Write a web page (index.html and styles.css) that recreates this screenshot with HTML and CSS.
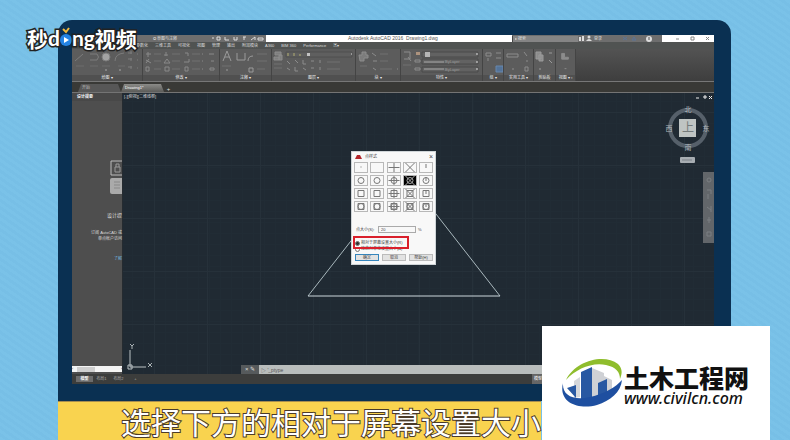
FILE: index.html
```html
<!DOCTYPE html>
<html lang="zh-CN">
<head>
  <meta charset="UTF-8">
  <meta name="viewport" content="width=device-width, initial-scale=1.0">
  <title>AutoCAD 点样式</title>
  <link rel="stylesheet" href="styles.css">
</head>
<body>
  <main class="page">
    <div class="monitor">
      <div class="app">
        <header class="titlebar">
          <div class="quick">
            <span class="workspace">✪ 草图与注释</span>
            <svg class="quick-icons" viewBox="0 0 56 7" width="56" height="7" fill="none" stroke="#ddd">
              <path d="M2 3h2M7 2h3v3h-3zM15 2v3h4M24 2v3h3v-3M33 2h3M34 2v3M41 5l4-3v3M48 3h5v2h-5z"/>
            </svg>
          </div>
          <div class="title">Autodesk AutoCAD 2016 &nbsp;Drawing1.dwg</div>
          <input class="search" type="text" aria-label="搜索" value="▸ 搜索">
          <div class="account">
            <svg viewBox="0 0 14 7" width="14" height="7" fill="#ddd"><path d="M1 2h2v4h-2zM4 1h2v5h-2z"/><circle cx="11" cy="2" r="1.5"/><path d="M8 6q3-4 6 0z"/></svg>
            <span>登录</span>
            <svg viewBox="0 0 52 7" width="52" height="7" fill="none"><path d="M19 2l4 3M23 2l-4 3M28 5l2-3 2 3z" stroke="#5b7598"/><circle cx="45" cy="4" r="3" fill="#ddd"/><path d="M45 2v3" stroke="#555"/></svg>
          </div>
          <svg class="window-buttons" viewBox="0 0 52 7" width="52" height="7" fill="none" stroke="#888">
            <path d="M14 4h3M29 2h3v3h-3zM44 2l3 3M47 2l-3 3"/>
          </svg>
        </header>

        <nav class="menubar">
          <span>参数化</span><span>三维工具</span><span>可视化</span><span>视图</span><span>管理</span><span>输出</span><span>附加模块</span><span>A360</span><span>BIM 360</span><span>Performance</span><span>▣▾</span>
        </nav>

        <div class="ribbon">
          <section class="panel draw">
            <svg viewBox="0 0 70 26" height="26" fill="none" stroke="#858585">
              <path d="M3 12L11 5M18 5h7q3 3 0 6h-7M43 12Q43 5 52 4M56 4h4M56 10h4M56 18h4M59 2v3M59 9v3M59 17v3M65 5h1M65 11h1M65 19h1"/>
              <circle cx="34" cy="8" r="4" fill="#b5b5b5"/>
              <path d="M4 17h8M18 17h8M30 17h8M46 17h7" stroke="#707070"/><path d="M33 21h2M47 21h2" stroke="#bbb"/>
            </svg>
            <span>绘图 ▾</span>
          </section>
          <section class="panel modify">
            <svg viewBox="0 0 76 26" height="26" fill="none" stroke="#959595">
              <path d="M3 5h5M5 3v5M3 11l5 3M3 14l3-4M3 18h3v4h-3zM23 3v4M21 6h4M21 14l3-4 3 4zM22 18h4v4h-4zM42 4h3v3M41 13h5v-3M42 18h3v4h-3zM66 5h5M68 12h3M67 19h4v2h-4z"/>
              <path d="M11 5h7M11 12h7M11 20h7M29 5h8M29 12h8M29 20h8M49 5h8M49 12h8M49 20h8" stroke="#777"/><path d="M59 5h1M59 12h1M59 20h1"/>
            </svg>
            <span>修改 ▾</span>
          </section>
          <section class="panel annotate">
            <svg viewBox="0 0 51 26" height="26" fill="none" stroke="#aaa">
              <path d="M3 12L7 2l4 10M5 8h4M17 4v7h8M25 4v7M28 12q0-5 5-5M29 19h4v4h-4z"/>
              <path d="M2 17h9M37 5h10M37 12h10M37 20h8" stroke="#777"/><path d="M6 21h2"/>
            </svg>
            <span>注释 ▾</span>
          </section>
          <section class="panel layers">
            <svg viewBox="0 0 83 26" height="26" fill="none" stroke="#999">
              <path d="M3 3h6v3h-6zM2 8h5v3h-5zM7 6h3v5h-3z" fill="#888"/>
              <path d="M14 3h66v5h-66z" fill="#606060" stroke="#4c4c4c"/>
              <path d="M16 4v3M22 4v3M28 5v2" stroke="#c7c277"/><path d="M35 4h3v3h-3z" fill="#ddd" stroke="none"/><path d="M79 5h1" stroke="#fff"/>
              <path d="M15 12l3 3M23 11l3 3M31 11v4h3M39 12h3M48 11v3M15 19l3 2M23 18v4h3M31 19l3 2M39 19h3M48 18v3"/>
              <path d="M2 15h8M2 19h8M55 13h13M55 20h13" stroke="#767676"/>
            </svg>
            <span>图层 ▾</span>
          </section>
          <section class="panel blocks">
            <svg viewBox="0 0 44 26" height="26" fill="none" stroke="#999">
              <path d="M3 6h3v-3h4v3h2v3h-4v3h-4z" fill="#858585"/><path d="M16 4l4 3M17 12h4M17 19l3 2M41 20h1"/><path d="M4 17h7M24 5h8M24 12h8M24 20h12" stroke="#767676"/>
            </svg>
            <span>块 ▾</span>
          </section>
          <section class="panel props">
            <svg viewBox="0 0 81 26" height="26" fill="none" stroke="#999">
              <path d="M3 3h6v7h-6M7 8l3 4"/><path d="M15 3h4v3h-4z" fill="#c2a187" stroke="none"/><path d="M14 11h5v2h-5zM14 19h5v2h-5z"/>
              <path d="M21 3h56v5h-56zM21 10h56v5h-56zM21 18h56v5h-56z" fill="#646464" stroke="#464646"/>
              <path d="M24 3h5v5h-5z" fill="#ccc" stroke="none"/><path d="M23 13h20M23 20h20" stroke="#bbb"/><path d="M75 5h2M75 13h2M75 20h2" stroke="#fff"/>
              <text x="44" y="14" fill="#aaa" stroke="none" font-size="4">ByLayer</text><text x="44" y="22" fill="#aaa" stroke="none" font-size="4">ByLayer</text><path d="M2 16h8" stroke="#777"/>
            </svg>
            <span>特性 ▾</span>
          </section>
          <section class="panel group">
            <svg viewBox="0 0 20 26" height="26" fill="none" stroke="#999">
              <path d="M3 4h5v3h-5zM5 9v3M13 4h5M13 9h5"/><path d="M13 17h7v6h-7z" fill="#5379a7" stroke="#6b93c1"/>
            </svg>
            <span>组 ▾</span>
          </section>
          <section class="panel utils">
            <svg viewBox="0 0 29 26" height="26" fill="none" stroke="#999"><path d="M3 5h11v3h-11zM20 3l3 4M22 12h2M21 18h3v4h-3zM8 20h2"/></svg>
            <span>实用工具 ▾</span>
          </section>
          <section class="panel clip">
            <svg viewBox="0 0 21 26" height="26" fill="#999" stroke="#aaa"><path d="M2 3h5v7h-5zM5 6h4v6h-4zM15 4h3M15 11l3 3M5 20h2"/></svg>
            <span>剪贴板</span>
          </section>
          <section class="panel views">
            <svg viewBox="0 0 20 26" height="26" fill="#999" stroke="#999"><path d="M6 4h3v4h4v2h-7zM9 20h2"/></svg>
            <span>视图 ▾ ▫</span>
          </section>
        </div>

        <div class="file-tabs">
          <button class="file-tab">开始</button>
          <button class="file-tab active">Drawing1*</button>
          <button class="add-tab" aria-label="新图形">+</button>
        </div>

        <div class="workspace-area">
          <aside class="palette">
            <h2>设计提要</h2>
            <div class="palette-body">
              <svg viewBox="0 0 12 34" width="12" height="34" fill="none">
                <path d="M12 1H1v14h11" stroke="#bbb"/><path d="M5 7h5v5h-5zM6 7v-3h3v3" stroke="#999"/>
                <path d="M12 18H2q-2 0-2 2v12q0 2 2 2h10z" fill="#aaa"/><path d="M4 22h6M4 25h6M4 28h6" stroke="#888"/>
              </svg>
              <h3>设计提</h3>
              <p>订阅 AutoCAD 或<br>单点帐户访问</p>
              <a href="#">了解</a>
            </div>
            <div class="scrollbar"><span>‹</span><i></i><span>›</span></div>
          </aside>

          <div class="canvas">
            <svg class="drawing" viewBox="0 0 591 281" width="591" height="281" fill="none">
              <path d="M185 203L281 80L377 203" stroke="#a9b8bd"/>
              <path d="M185 203H377" stroke="#cbd6dc"/>
              <path d="M7 257V274H23" stroke="#bcc3c6"/><path d="M5 272h4v4h-4z" stroke="#bcc3c6"/>
              <path d="M7 251l2 2 2-2M9 253v3M25 270l4 4M29 270l-4 4" stroke="#aab2b5"/>
              <circle cx="565" cy="35" r="18" stroke="#56606a" stroke-width="4"/>
              <rect x="556" y="26" width="17" height="18" fill="#bfc4c3"/>
              <rect x="557" y="64" width="15" height="6" rx="1" fill="#a7adb2"/>
              <path d="M559 67h10" stroke="#7a8188"/>
              <rect x="580" y="79" width="11" height="71" fill="#62666a"/>
              <g stroke="#7b7f82"><circle cx="586" cy="87" r="2"/><path d="M584 97h4v4M585 101v5M584 114l4 3M588 113v6M584 127h4M586 124v6M584 139h4v4h-4z"/></g>
              <path d="M573 5h3M581 3h2v2h-2zM586 3l3 3M589 3l-3 3" stroke="#eee"/>
              <g class="compass">
                <text x="565" y="19">北</text><text x="546" y="38">西</text><text x="583" y="38">东</text><text x="565" y="57">南</text>
                <text class="top" x="565" y="39">上</text>
              </g>
            </svg>
            <div class="view-label">[-][俯视][二维线框]</div>

            <form class="dialog">
              <header><svg viewBox="0 0 7 7" width="7" height="7"><path d="M0 6L2 2h3l2 4z" fill="#b3262b"/></svg><span>点样式</span><button type="button" class="close" aria-label="关闭">×</button></header>
              <svg class="defs" width="0" height="0">
                <defs>
                  <path id="plus" d="M1 5.500H12M6.500 0V11"/>
                  <path id="cross" d="M2 1L11 10M11 1L2 10"/>
                  <path id="tick" d="M6.500 2V6"/>
                  <circle id="ring" cx="6.500" cy="5.500" r="3"/>
                  <path id="box" d="M3.500 2.500h6v6h-6z"/>
                </defs>
              </svg>
              <div class="styles">
                <button type="button" aria-label="点"><svg viewBox="0 0 13 11"><path d="M6 5h1"/></svg></button>
                <button type="button" aria-label="无"><svg viewBox="0 0 13 11"></svg></button>
                <button type="button" aria-label="加号"><svg viewBox="0 0 13 11"><use href="#plus"/></svg></button>
                <button type="button" aria-label="叉号"><svg viewBox="0 0 13 11"><use href="#cross"/></svg></button>
                <button type="button" aria-label="竖线"><svg viewBox="0 0 13 11"><use href="#tick"/></svg></button>
                <button type="button" aria-label="圆点"><svg viewBox="0 0 13 11"><use href="#ring"/></svg></button>
                <button type="button" aria-label="圆"><svg viewBox="0 0 13 11"><use href="#ring"/></svg></button>
                <button type="button" aria-label="圆加号"><svg viewBox="0 0 13 11"><use href="#ring"/><use href="#plus"/></svg></button>
                <button type="button" class="selected" aria-label="圆叉号"><svg viewBox="0 0 13 11"><use href="#ring"/><use href="#cross"/></svg></button>
                <button type="button" aria-label="圆竖线"><svg viewBox="0 0 13 11"><use href="#ring"/><use href="#tick"/></svg></button>
                <button type="button" aria-label="方点"><svg viewBox="0 0 13 11"><use href="#box"/></svg></button>
                <button type="button" aria-label="方"><svg viewBox="0 0 13 11"><use href="#box"/></svg></button>
                <button type="button" aria-label="方加号"><svg viewBox="0 0 13 11"><use href="#box"/><use href="#plus"/></svg></button>
                <button type="button" aria-label="方叉号"><svg viewBox="0 0 13 11"><use href="#box"/><use href="#cross"/></svg></button>
                <button type="button" aria-label="方竖线"><svg viewBox="0 0 13 11"><use href="#box"/><use href="#tick"/></svg></button>
                <button type="button" aria-label="方圆点"><svg viewBox="0 0 13 11"><use href="#box"/><use href="#ring"/></svg></button>
                <button type="button" aria-label="方圆"><svg viewBox="0 0 13 11"><use href="#box"/><use href="#ring"/></svg></button>
                <button type="button" aria-label="方圆加号"><svg viewBox="0 0 13 11"><use href="#box"/><use href="#ring"/><use href="#plus"/></svg></button>
                <button type="button" aria-label="方圆叉号"><svg viewBox="0 0 13 11"><use href="#box"/><use href="#ring"/><use href="#cross"/></svg></button>
                <button type="button" aria-label="方圆竖线"><svg viewBox="0 0 13 11"><use href="#box"/><use href="#ring"/><use href="#tick"/></svg></button>
              </div>
              <div class="size-row"><label for="size">点大小(S):</label><input id="size" type="text" value="20"><span>%</span></div>
              <div class="choices">
                <label><input type="radio" name="mode" checked>相对于屏幕设置大小(R)</label>
                <label><input type="radio" name="mode">按绝对单位设置大小(A)</label>
                <div class="highlight"></div>
              </div>
              <div class="actions"><button type="button" class="primary">确定</button><button type="button">取消</button><button type="button">帮助(H)</button></div>
            </form>

            <div class="command">
              <div class="command-tools">× ✎</div>
              <input type="text" aria-label="命令" value="▷ '_ptype">
            </div>
          </div>
        </div>

        <footer class="status">
          <button class="active">模型</button><button>布局1</button><button>布局2</button><button>+</button>
          <span class="model">模型</span>
        </footer>
      </div>
    </div>
    <div class="caption">选择下方的相对于屏幕设置大小</div>
  </main>

  <div class="brand">
    <span>秒</span><span class="latin">d</span>
    <svg viewBox="0 0 12 24" width="12" height="24"><path d="M3 3l3 3 3-4" fill="none" stroke="#f4b93a" stroke-width="2"/><circle cx="6" cy="14" r="6" fill="#2583e3"/><path d="M4 11l5 3-5 3z" fill="#fff"/></svg>
    <span class="latin">ng</span><span>视频</span>
  </div>

  <div class="watermark">
    <svg viewBox="0 0 62 52" width="62" height="52">
      <path d="M4 22C13 3 42-5 56 6c5 5 4 10 2 15 0-7-4-12-14-14C30 4 14 11 4 22z" fill="#8fbd2d"/>
      <path d="M30 10l12 5v25h-12zM42 18l8 4v13l-8 3z" fill="#cfd1d5"/>
      <path d="M12 23l6-4v20l-6 1z" fill="#d5d7da"/>
      <path d="M19 14l11-5v32h-11zM36 25l9-4v15l-9 4zM5 30l9-3v13z" fill="#2858a2"/>
      <path d="M1 25c-1 12 10 18 27 14 14-3 26-10 32-17-1 12-12 21-25 25C17 52-4 45 1 25z" fill="#1e4fa0"/>
    </svg>
    <div class="site"><strong>土木工程网</strong><span>www.civilcn.com</span></div>
  </div>
</body>
</html>
```
FILE: styles.css
```css
* {
  box-sizing: border-box;
}
body {
  margin: 0;
  min-height: 100vh;
  overflow: hidden;
  background: repeating-linear-gradient(35deg, #7ac2e8 0 3px, #77bfe6 3px 6px);
  font-family: "Liberation Sans", "Noto Sans CJK SC", sans-serif;
  font-size: 4px;
  line-height: 6px;
}
button, input {
  font: inherit;
  color: inherit;
  margin: 0;
  padding: 0;
  border: 0;
  border-radius: 0;
  background: none;
}
svg {
  display: block;
  flex: none;
}
.page {
  display: flex;
  flex-direction: column;
  min-height: 100vh;
  padding: 20px 59px 0 58px;
}
.monitor {
  flex: 1;
  display: flex;
  padding: 15px 17px 17px 14px;
  border-radius: 14px 14px 0 0;
  background: #0a3052;
}
.app {
  flex: 1;
  min-width: 0;
  display: flex;
  flex-direction: column;
  background: #3c3d3c;
  color: #ddd;
}

/* title and menu */
.titlebar {
  display: flex;
  align-items: center;
  height: 7px;
  background: #6e6e6e;
}
.quick {
  display: flex;
  align-items: center;
  justify-content: space-between;
  width: 194px;
  padding-left: 81px;
}
.title {
  flex: 1;
  height: 7px;
  line-height: 7px;
  padding-left: 82px;
  background: #fff;
  color: #555;
  font-size: 5px;
  white-space: nowrap;
}
.search {
  width: 66px;
  height: 6px;
  padding-left: 2px;
  border-left: 1px solid #444;
  background: #858585;
}
.account {
  display: flex;
  align-items: center;
  gap: 2px;
  width: 84px;
  overflow: hidden;
}
.window-buttons {
  background: #fff;
}
.menubar {
  display: flex;
  align-items: center;
  gap: 7px;
  height: 7px;
  padding-left: 64px;
  background: #505352;
  white-space: nowrap;
}

/* ribbon */
.ribbon {
  display: flex;
  height: 33px;
  background: linear-gradient(#535353, #3e3e3e);
  border-bottom: 1px solid #777;
}
.panel {
  display: flex;
  flex-direction: column;
  overflow: hidden;
  border-right: 1px solid #444;
  background: #5c5c5c;
}
.panel svg {
  opacity: 0.8;
}
.panel span {
  height: 6px;
  background: #505050;
  color: #eee;
  text-align: center;
  white-space: nowrap;
}
.draw { width: 71px; }
.modify { width: 77px; }
.annotate { width: 52px; }
.layers { width: 84px; }
.blocks { width: 45px; }
.props { width: 82px; }
.group { width: 21px; }
.utils { width: 30px; }
.clip { width: 22px; }
.views { width: 20px; }

.file-tabs {
  display: flex;
  align-items: flex-end;
  height: 11px;
  padding-left: 6px;
  border-bottom: 1px solid #747474;
  background: #393936;
}
.file-tab {
  width: 43px;
  height: 8px;
  padding-left: 4px;
  text-align: left;
  background: #575757;
  color: #bbb;
  clip-path: polygon(3px 0, 40px 0, 100% 100%, 0 100%);
}
.file-tab.active {
  background: linear-gradient(#8b8b88, #5c5c59);
  color: #fff;
}
.add-tab {
  width: 9px;
  height: 7px;
  color: #ddd;
  font-size: 6px;
}

/* palette */
.workspace-area {
  flex: 1;
  display: flex;
}
.palette {
  display: flex;
  flex-direction: column;
  width: 51px;
  border-right: 1px solid #252b30;
  background: #4e4e4e;
}
.palette h2 {
  margin: 0;
  padding: 1px 5px;
  font-size: 4px;
  color: #fff;
  background: #484848;
}
.palette-body {
  flex: 1;
  display: flex;
  flex-direction: column;
  align-items: flex-end;
  padding-top: 59px;
  text-align: right;
  white-space: nowrap;
}
.palette h3 {
  margin: 18px 0 12px;
  font-size: 5px;
  font-weight: 400;
}
.palette p {
  margin: 0 0 14px;
}
.palette a {
  color: #6fb1dc;
  text-decoration: none;
}
.scrollbar {
  display: flex;
  align-items: center;
  height: 6px;
  margin-bottom: 2px;
  background: #f4f4f4;
  color: #444;
}
.scrollbar i {
  width: 18px;
  height: 5px;
  margin: 0 auto 0 4px;
  background: #cfcfcf;
}

/* drawing area */
.canvas {
  position: relative;
  flex: 1;
  min-width: 0;
  display: flex;
  flex-direction: column;
  justify-content: flex-end;
  background-color: #202a33;
  background-image:
    linear-gradient(90deg, #26313a 1px, transparent 1px),
    linear-gradient(#26313a 1px, transparent 1px),
    linear-gradient(90deg, #212c35 1px, transparent 1px),
    linear-gradient(#212c35 1px, transparent 1px);
  background-size: 53px 53px, 53px 53px, 11px 11px, 11px 11px;
  background-position: 31px 19px;
}
.drawing {
  position: absolute;
  top: 0;
  right: 0;
}
.compass {
  fill: #aeb6bb;
  font-size: 7px;
  text-anchor: middle;
}
.compass .top {
  fill: #747a7b;
  font-size: 12px;
}
.view-label {
  position: absolute;
  top: 1px;
  left: 1px;
  color: #ddd;
}
.command {
  display: flex;
  height: 9px;
  margin-left: 118px;
  background: #b9bdbc;
}
.command-tools {
  width: 18px;
  padding-left: 4px;
  background: #565a5c;
  color: #ddd;
  font-size: 6px;
  line-height: 9px;
  white-space: nowrap;
}
.command input {
  flex: 1;
  position: relative;
  padding-left: 2px;
  color: #555;
  font-size: 5px;
}

/* point style dialog */
.dialog {
  position: absolute;
  top: 58px;
  left: 228px;
  width: 85px;
  padding: 0 2px 3px;
  border: 1px solid #cfd5d8;
  background: #f8f8f8;
  color: #444;
}
.dialog header {
  display: flex;
  align-items: center;
  gap: 3px;
  height: 9px;
  padding-left: 1px;
}
.close {
  margin-left: auto;
  font-size: 7px;
}
.defs {
  position: absolute;
}
.styles {
  display: grid;
  grid-template-columns: repeat(5, 14px);
  justify-content: space-between;
  gap: 2px;
  padding-top: 1px;
}
.styles button {
  height: 11px;
  outline: 1px solid #b8b8b8;
  outline-offset: -1px;
}
.styles svg {
  width: 14px;
  height: 11px;
  fill: none;
  stroke: #777;
}
.styles .selected {
  background: #000;
}
.styles .selected svg {
  stroke: #aaa;
}
.size-row {
  display: flex;
  align-items: center;
  gap: 2px;
  padding: 14px 0 0 2px;
}
.size-row label {
  width: 20px;
  white-space: nowrap;
}
.size-row input {
  width: 38px;
  height: 7px;
  padding-left: 2px;
  border: 1px solid #aaa;
}
.choices {
  position: relative;
  padding: 7px 0 2px 1px;
}
.choices label {
  display: flex;
  align-items: center;
  gap: 1px;
  white-space: nowrap;
}
.choices input {
  appearance: none;
  width: 5px;
  height: 5px;
  border: 1px solid #777;
  border-radius: 50%;
}
.choices input:checked {
  background: #333;
}
.highlight {
  position: absolute;
  top: 3px;
  left: -1px;
  width: 56px;
  height: 13px;
  border: 2px solid #d9202c;
}
.actions {
  display: flex;
  gap: 3px;
  padding-left: 1px;
}
.actions button {
  width: 24px;
  height: 7px;
  border: 1px solid #bbb;
  background: #e2e2e2;
  line-height: 5px;
}
.actions .primary {
  border-color: #3686bd;
}

.status {
  display: flex;
  align-items: center;
  height: 10px;
  padding: 0 170px 0 4px;
  color: #aaa;
}
.status button {
  width: 17px;
  height: 6px;
}
.status .active {
  background: #6c6c6c;
  color: #fff;
  font-weight: 700;
}
.status .model {
  margin-left: auto;
  padding: 2px;
  background: #666;
  color: #fff;
}

.caption {
  align-self: flex-start;
  height: 39px;
  padding-left: 63px;
  border-top: 1px solid #a78e50;
  background: #f9d34f;
  color: #fff;
  font-family: "Noto Sans CJK SC", sans-serif;
  font-size: 30px;
  line-height: 38px;
  white-space: nowrap;
  -webkit-text-stroke: 2px #4b3b29;
  paint-order: stroke fill;
}

/* logos over the frame */
.brand {
  position: absolute;
  top: 26px;
  left: 27px;
  display: flex;
  align-items: center;
  color: #fff;
  font-family: "Noto Sans CJK SC", sans-serif;
  font-size: 21px;
  font-style: oblique 8deg;
  font-weight: 700;
  line-height: 24px;
  -webkit-text-stroke: 3px #222;
  paint-order: stroke fill;
}
.brand .latin {
  font-family: Lato, sans-serif;
  font-style: normal;
}
.watermark {
  position: absolute;
  right: 20px;
  bottom: 0;
  display: flex;
  width: 228px;
  height: 114px;
  padding: 32px 0 0 20px;
  background: #fff;
}
.site {
  display: flex;
  flex-direction: column;
  color: #111;
  font-style: italic;
  padding-top: 6px;
}
.site strong {
  font-family: "Noto Sans CJK SC", sans-serif;
  font-size: 25px;
  font-style: oblique 8deg;
  font-weight: 900;
  line-height: 26px;
}
.site span {
  font-family: "Noto Sans", sans-serif;
  font-size: 16px;
  font-weight: 500;
  line-height: 16px;
}
```
